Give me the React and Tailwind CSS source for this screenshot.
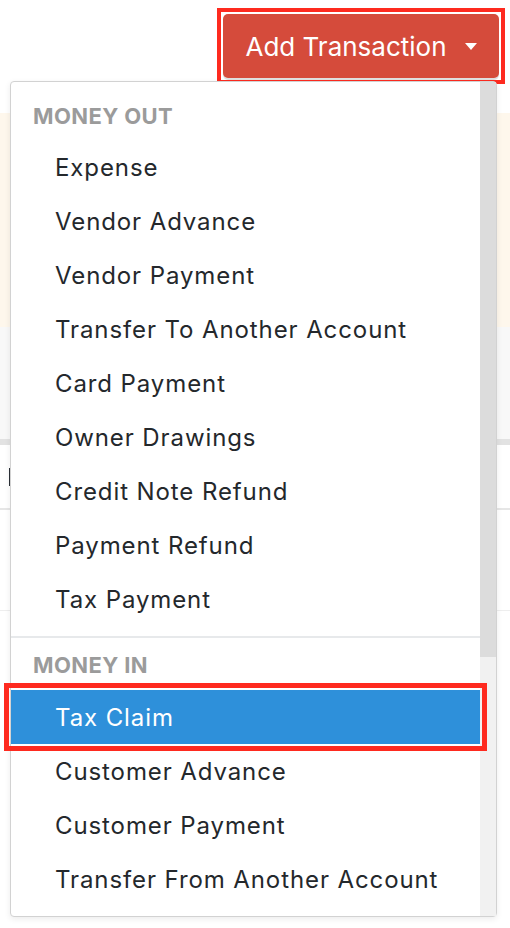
import React from "react";

const moneyOut = [
  "Expense",
  "Vendor Advance",
  "Vendor Payment",
  "Transfer To Another Account",
  "Card Payment",
  "Owner Drawings",
  "Credit Note Refund",
  "Payment Refund",
  "Tax Payment",
];

const moneyIn = [
  "Customer Advance",
  "Customer Payment",
  "Transfer From Another Account",
];

const itemCls =
  "flex h-[54px] items-center pl-[44px] pt-[2px] text-[24px] tracking-[0.9px] text-[#24282c]";
const headCls =
  "flex items-center pl-[22px] pt-[2px] text-[22px] font-bold tracking-[0.4px] text-[#9b9b9b]";

export default function App() {
  return (
    <div
      className="relative w-[510px] h-[928px] overflow-hidden bg-white"
      style={{ fontFamily: "Inter, 'Open Sans', sans-serif" }}
    >
      {/* page content behind dropdown */}
      <div className="flex h-[113px] items-start justify-end pr-[5px] pt-[8px]">
        <div className="border-[4px] border-[#fe2a1f] p-[2px]">
          <button className="flex h-[64px] w-[276px] items-center justify-center gap-[18px] rounded-[5px] bg-[#d54b3b] text-[26px] tracking-[0px] text-white shadow-[0_2px_0_rgba(0,0,0,0.12)]">
            <span>Add Transaction</span>
            <svg width="12" height="7" viewBox="0 0 12 7" className="mt-[1px]">
              <path d="M0 0 L12 0 L6 7 Z" fill="#ffffff" />
            </svg>
          </button>
        </div>
      </div>
      <div className="h-[214px] bg-[#fef7ec]" />
      <div className="h-[118px] bg-[#f8f8f8] border-b-[6px] border-[#e2e2e2]" />
      <div className="flex h-[65px] items-center border-b-2 border-[#e6e6e6] pl-[9px]">
        <div className="h-[18px] w-[3px] bg-[#2a2f36]" />
      </div>
      <div className="h-[101px] border-b border-[#eeeeee]" />

      {/* dropdown menu */}
      <div className="absolute left-[10px] top-[81px] flex w-[487px] rounded-[4px] border border-[#d2d2d2] bg-white shadow-[0_2px_6px_rgba(0,0,0,0.08)]">
        <div className="flex-1 pt-[8px] pb-[10px]">
          <div className={`${headCls} h-[50px]`}>MONEY OUT</div>
          {moneyOut.map((t) => (
            <div key={t} className={itemCls}>
              {t}
            </div>
          ))}
          <div className="mt-[10px] h-[2px] bg-[#e7e9eb]" />
          <div className={`${headCls} h-[52px]`}>MONEY IN</div>
          <div className="relative z-10 flex h-[54px] items-center bg-[#2e90da] pl-[44px] pt-[2px] text-[24px] tracking-[0.9px] text-white outline-[5px] outline-offset-[2px] outline-[#fe2a1f] outline-solid">
            Tax Claim
          </div>
          {moneyIn.map((t) => (
            <div key={t} className={itemCls}>
              {t}
            </div>
          ))}
        </div>
        <div className="flex w-[16px] flex-col bg-[#f1f1f1]">
          <div className="h-[575px] bg-[#dcdcdc]" />
        </div>
      </div>
    </div>
  );
}
